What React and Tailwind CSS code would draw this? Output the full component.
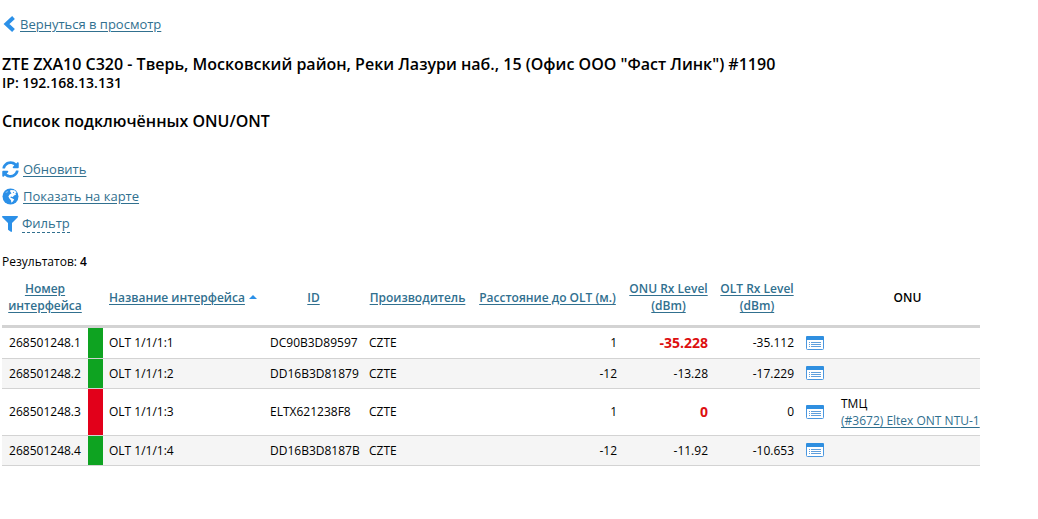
import { FaSyncAlt, FaFilter } from "react-icons/fa";

const link = "text-[#31708f] underline underline-offset-2";

const rows = [
  { number: "268501248.1", online: true, name: "OLT 1/1/1:1", id: "DC90B3D89597", vendor: "CZTE", distance: "1", onuRx: "-35.228", alert: true, oltRx: "-35.112" },
  { number: "268501248.2", online: true, name: "OLT 1/1/1:2", id: "DD16B3D81879", vendor: "CZTE", distance: "-12", onuRx: "-13.28", oltRx: "-17.229" },
  { number: "268501248.3", online: false, name: "OLT 1/1/1:3", id: "ELTX621238F8", vendor: "CZTE", distance: "1", onuRx: "0", alert: true, oltRx: "0", onu: "(#3672) Eltex ONT NTU-1" },
  { number: "268501248.4", online: true, name: "OLT 1/1/1:4", id: "DD16B3D8187B", vendor: "CZTE", distance: "-12", onuRx: "-11.92", oltRx: "-10.653" },
];

function BackIcon() {
  return (
    <svg width="14" height="18" viewBox="0 0 14 18" aria-hidden="true">
      <path d="M11.5 2.5L4.5 9L11.5 15.5" fill="none" stroke="#2b90e8" strokeWidth="4" />
    </svg>
  );
}

function GlobeIcon() {
  return (
    <svg width="17" height="17" viewBox="0 0 17 17" aria-hidden="true">
      <circle cx="8.5" cy="8.5" r="8" fill="#2b90e8" />
      <path d="M8.4 2L12.4 2.2L14.6 4.2L13.4 5.2L14 6.8L12 7.6L10.8 9L9 8.4L8.2 9.4L10.6 10.6L12.2 11.4L10.8 13.6L9.4 14.8L9 12.2L7.4 10.4L6.4 8.4L7.6 6.4L9.6 5.2L8.2 3.8Z" fill="#fff" />
      <path d="M10.6 4.6L12 3.8L12.2 5.2Z" fill="#2b90e8" />
      <path d="M3.2 5L5 3L6.4 3.2L5 4.8Z" fill="#fff" opacity="0.4" />
    </svg>
  );
}

function DetailsIcon() {
  return (
    <svg width="18" height="14" viewBox="0 0 18 14" aria-hidden="true">
      <rect x="0.5" y="0.5" width="17" height="13" rx="1" fill="#fff" stroke="#4a97df" />
      <path d="M0 1.2Q0 0 1.2 0H16.8Q18 0 18 1.2V4H0Z" fill="#2f8fe0" />
      <path d="M3 6.5h1M3 8.5h1M3 10.5h1M5 6.5H15M5 8.5H15M5 10.5H15" stroke="#5f9fdc" />
    </svg>
  );
}

function SortLink({ children }) {
  return <a href="#sort" className={link}>{children}</a>;
}

function Row({ row }) {
  return (
    <tr className="h-[30px] border-b border-[#d3d3d3] first:h-8 even:bg-[#f5f5f5]">
      <td className="text-center">{row.number}</td>
      <td className={row.online ? "bg-[#0ea321]" : "bg-[#e2001a]"} />
      <td className="pl-1.5">{row.name}</td>
      <td className="pl-1.5">{row.id}</td>
      <td className="pl-1.5">{row.vendor}</td>
      <td className="pr-1.5 text-right">{row.distance}</td>
      <td className={row.alert ? "pr-1.5 text-right text-sm font-bold text-[#dd0f0f]" : "pr-1.5 text-right"}>{row.onuRx}</td>
      <td className="pr-1.5 text-right">{row.oltRx}</td>
      <td className="pl-1.5">
        <a href="#details" aria-label={`ONU ${row.id}`} className="block w-fit"><DetailsIcon /></a>
      </td>
      <td className="pl-1.5">
        {row.onu && (
          <div className="py-1.5">
            <div>ТМЦ</div>
            <a href="#onu" className={link}>{row.onu}</a>
          </div>
        )}
      </td>
    </tr>
  );
}

export default function App() {
  return (
    <main className="min-h-screen bg-white px-0.5 pt-[15px] pb-8 font-['Open_Sans','Noto_Sans',sans-serif] text-xs leading-[17px] text-black">
      <a href="#view" className="flex w-fit items-center gap-1 text-[13px] text-[#31708f]">
        <BackIcon />
        <span className="underline underline-offset-2">Вернуться в просмотр</span>
      </a>

      <h1 className="mt-5 text-base leading-[22px] font-semibold">
        ZTE ZXA10 C320 - Тверь, Московский район, Реки Лазури наб., 15 (Офис ООО "Фаст Линк") #1190
      </h1>
      <p className="text-sm leading-4 font-semibold">IP: 192.168.13.131</p>
      <h2 className="mt-[19px] text-base leading-[22px] font-semibold">Список подключённых ONU/ONT</h2>

      <nav className="mt-[29px] flex flex-col items-start gap-2.5 text-[13px]">
        <a href="#refresh" className="flex items-center gap-1 text-[#31708f]">
          <FaSyncAlt className="size-[17px] text-[#2b90e8]" />
          <span className="underline underline-offset-2">Обновить</span>
        </a>
        <a href="#map" className="flex items-center gap-1 text-[#31708f]">
          <GlobeIcon />
          <span className="underline underline-offset-2">Показать на карте</span>
        </a>
        <button type="button" className="flex items-center gap-1 text-[#31708f]">
          <FaFilter className="size-4 text-[#2b90e8]" />
          <span className="border-b border-dashed border-[#31708f]">Фильтр</span>
        </button>
      </nav>

      <p className="mt-5">Результатов: <b className="font-semibold">4</b></p>

      <table className="mt-1 w-full max-w-[978px] table-fixed border-collapse">
        <colgroup>
          <col className="w-[86px]" />
          <col className="w-[15px]" />
          <col className="w-[161px]" />
          <col className="w-[99px]" />
          <col className="w-[109px]" />
          <col className="w-[151px]" />
          <col className="w-[91px]" />
          <col className="w-[86px]" />
          <col className="w-[35px]" />
          <col className="w-[145px]" />
        </colgroup>
        <thead>
          <tr className="h-[52px] border-b-[3px] border-[#d3d3d3] text-xs leading-[17px] [&>th]:pb-1 [&>th]:font-semibold">
            <th><SortLink>Номер интерфейса</SortLink></th>
            <th />
            <th>
              <div className="flex items-center gap-1 pl-1.5 whitespace-nowrap">
                <SortLink>Название интерфейса</SortLink>
                <svg width="8" height="4" viewBox="0 0 8 4" className="shrink-0" aria-hidden="true">
                  <path d="M0 4L4 0L8 4Z" fill="#2b90e8" />
                </svg>
              </div>
            </th>
            <th><SortLink>ID</SortLink></th>
            <th><SortLink>Производитель</SortLink></th>
            <th className="whitespace-nowrap"><SortLink>Расстояние до OLT (м.)</SortLink></th>
            <th><SortLink>ONU Rx Level (dBm)</SortLink></th>
            <th><SortLink>OLT Rx Level (dBm)</SortLink></th>
            <th />
            <th>ONU</th>
          </tr>
        </thead>
        <tbody>
          {rows.map((row) => <Row key={row.number} row={row} />)}
        </tbody>
      </table>
    </main>
  );
}
